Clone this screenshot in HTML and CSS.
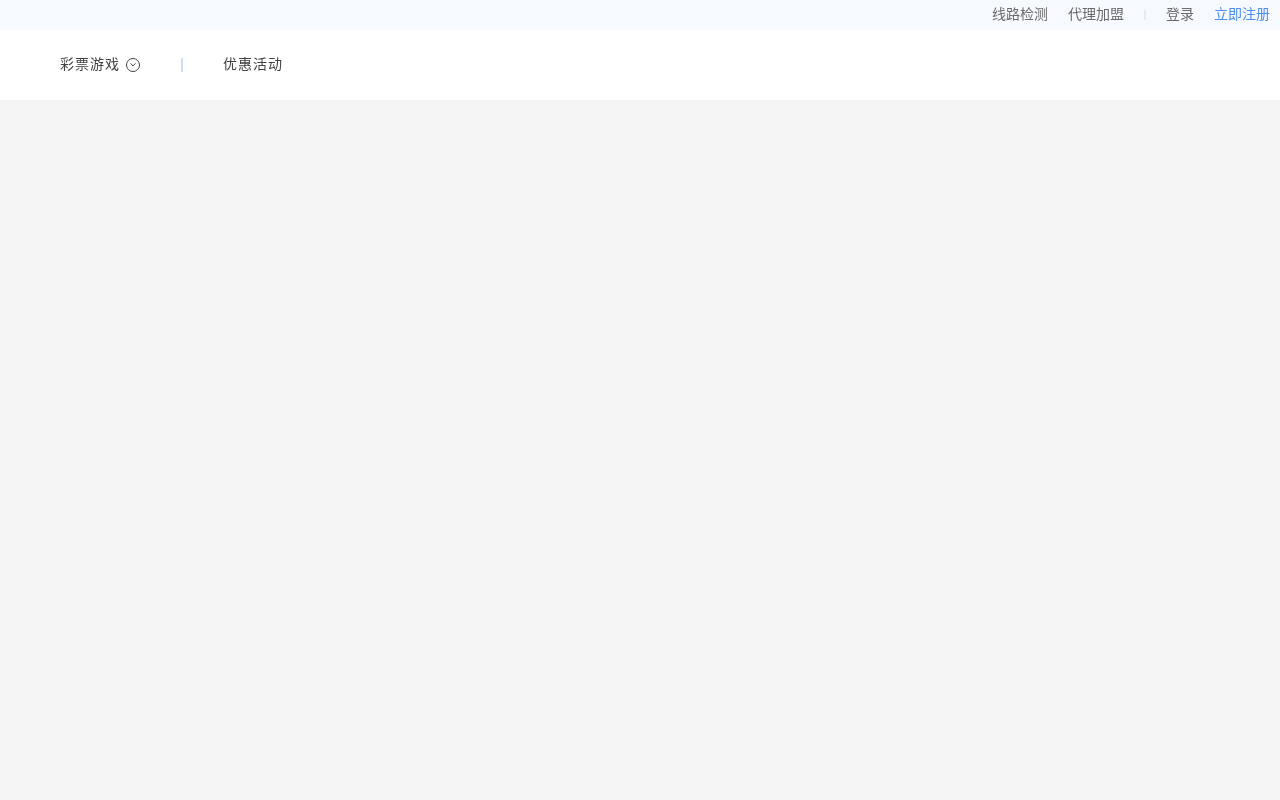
FILE: index.html
```html
<!DOCTYPE html>
<html>
<head>
  <title>彩票游戏</title>
  <link rel="stylesheet" href="styles.css">
</head>
<body>
  <div class="top-bar">
    <a href="#">线路检测</a>
    <a href="#">代理加盟</a>
    <span class="top-sep"></span>
    <a href="#">登录</a>
    <a href="#" class="register">立即注册</a>
  </div>

  <div class="nav-bar">
    <a href="#" class="nav-item">彩票游戏
      <svg class="nav-arrow" width="14" height="14" viewBox="0 0 14 14">
        <circle cx="7" cy="7" r="6.5" fill="none" stroke="#444" stroke-width="1"/>
        <path d="M4.5 5.3 L7 8 L9.5 5.3" fill="none" stroke="#444" stroke-width="1"/>
      </svg>
    </a>
    <span class="nav-sep"></span>
    <a href="#" class="nav-item">优惠活动</a>
  </div>
</body>
</html>
```

FILE: styles.css
```css
body {
  margin: 0;
  height: 800px;
  overflow: hidden;
  background-color: #f5f5f5;
  font-family: "Noto Sans CJK SC", sans-serif;
}

a {
  text-decoration: none;
  will-change: transform;
}

/* top links */
.top-bar {
  height: 30px;
  background-color: #f6f9fe;
  display: flex;
  justify-content: flex-end;
  align-items: center;
  padding-right: 10px;
  font-size: 14px;
  line-height: 30px;
}

.top-bar a {
  color: #6a6a6a;
  margin-left: 20px;
  padding-bottom: 4px;
}

.top-bar a.register {
  color: #4a8cf0;
}

.top-sep {
  width: 2px;
  height: 10px;
  background-color: #e6e9ee;
  margin-left: 20px;
}

/* main nav */
.nav-bar {
  height: 70px;
  background-color: #fff;
  display: flex;
  align-items: center;
  padding-left: 60px;
  line-height: 70px;
}

.nav-item {
  color: #404040;
  font-size: 14px;
  letter-spacing: 1px;
  display: flex;
  align-items: center;
  padding-bottom: 4px;
}

.nav-arrow {
  margin-left: 6px;
  margin-top: 4px;
}

.nav-sep {
  width: 2px;
  height: 14px;
  background-color: #c9def8;
  margin-left: 41px;
  margin-right: 40px;
}
```
